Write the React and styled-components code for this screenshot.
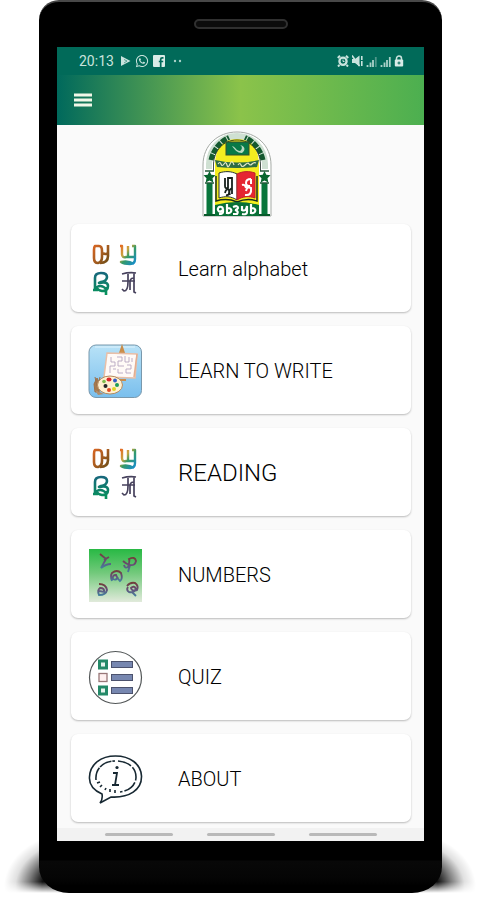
import styled, { createGlobalStyle } from "styled-components";
import { FaWhatsapp } from "react-icons/fa";

const GlobalStyle = createGlobalStyle`
  * {
    box-sizing: border-box;
  }
  body {
    margin: 0;
    background: #fff;
    font-family: Roboto, "Liberation Sans", sans-serif;
  }
`;

const Stage = styled.div`
  position: relative;
  padding: 0 38px 0 39px;
  overflow: hidden;
`;

const FloorShadow = styled.span`
  position: absolute;
  bottom: 0;
  ${(props) => props.$side}: 0;
  width: 80px;
  height: 56px;
  background: radial-gradient(
    ellipse 76px 56px at ${(props) => (props.$side === "left" ? "right" : "left")} 50px,
    #000 0%,
    rgba(0, 0, 0, 0.95) 50%,
    rgba(0, 0, 0, 0.5) 68%,
    rgba(0, 0, 0, 0.12) 85%,
    transparent 100%
  );
  mask-image: linear-gradient(#000 80%, transparent 100%);
`;

const Phone = styled.div`
  position: relative;
  padding: 0 18px 52px;
  background: linear-gradient(#000 0, #000 858px, #080808 859px, #050505 876px, #000 884px);
  border-top: 2px solid #484848;
  border-radius: 20px 20px 30px 30px / 20px 20px 26px 26px;
`;

const Earpiece = styled.div`
  height: 45px;
  padding-top: 17px;
  span {
    display: block;
    width: 94px;
    height: 10px;
    margin: 0 auto;
    border: 2px solid #303030;
    border-radius: 5px;
    background: #0c0c0c;
  }
`;

const Screen = styled.div`
  background: #fafafa;
`;

const StatusBar = styled.div`
  display: flex;
  align-items: center;
  justify-content: space-between;
  height: 28px;
  padding: 0 20px 0 22px;
  background: #016a59;
  color: #c9e3dd;
  font-size: 14px;
`;

const StatusGroup = styled.div`
  display: flex;
  align-items: center;
  gap: ${(props) => props.$gap || "4px"};
  svg {
    display: block;
  }
  time {
    margin-right: 2px;
  }
`;

const Toolbar = styled.header`
  display: flex;
  align-items: center;
  height: 50px;
  padding: 0 17px;
  background: linear-gradient(90deg, #00695c 0%, #8bc34a 50%, #4caf50 100%);
`;

const MenuButton = styled.button`
  display: block;
  padding: 0;
  border: 0;
  background: none;
  svg {
    display: block;
  }
`;

const LogoWrapper = styled.div`
  display: flex;
  justify-content: center;
  padding: 6px 8px 7px 0;
`;

const CardList = styled.main`
  display: flex;
  flex-direction: column;
  gap: 14px;
  padding: 0 13px 6px 14px;
`;

const Card = styled.button`
  display: flex;
  align-items: center;
  gap: 35px;
  width: 100%;
  height: 88px;
  padding: 2px 17px 0;
  border: 0;
  border-radius: 7px;
  background: #fff;
  box-shadow: 0 1px 2px rgba(0, 0, 0, 0.26);
  color: #000;
  font-family: inherit;
  font-size: ${(props) => (props.$large ? "24px" : "20px")};
  font-weight: 300;
  text-align: left;
  svg {
    flex: none;
  }
`;

const NavBar = styled.div`
  display: flex;
  justify-content: center;
  gap: 34px;
  height: 13px;
  padding-top: 5px;
  background: #f2f2f2;
  span {
    width: 68px;
    height: 3px;
    border-radius: 2px;
    background: #b9b9b9;
  }
`;

const PlayIcon = () => (
  <svg width="11" height="12" viewBox="0 0 11 12">
    <path d="M1 1l9.500 5L1 11z" fill="#c9e3dd" />
    <path d="M4 4.500l3 1.500-3 2" stroke="#3f8f81" strokeWidth=".8" fill="none" />
  </svg>
);

const FacebookIcon = () => (
  <svg width="12" height="12" viewBox="0 0 12 12">
    <rect width="12" height="12" rx="1" fill="#d9ece7" />
    <path d="M10.5 2.8H9.2Q7.7 2.8 7.7 4.3V12M5.8 6.5h4.4" stroke="#016a59" strokeWidth="1.7" fill="none" />
  </svg>
);

const MoreDots = () => (
  <svg width="18" height="4" viewBox="0 0 18 4" fill="#a9d1c8">
    <circle cx="6" cy="2" r="1.200" />
    <circle cx="11" cy="2" r="1.200" />
  </svg>
);

const AlarmIcon = () => (
  <svg width="12" height="12" viewBox="0 0 12 12" fill="none" stroke="#c9e3dd">
    <circle cx="6" cy="6.3" r="3.6" strokeWidth="2.3" />
    <path d="M.8 3L3 .8M11.200 3L9 .8M2.500 10L1 11.500M9.500 10L11 11.500" strokeWidth="2" />
    <path d="M6 4.500v2h1.500" strokeWidth="1" />
  </svg>
);

const MuteIcon = () => (
  <svg width="11" height="12" viewBox="0 0 11 12" fill="#c9e3dd">
    <path d="M0 4h3L7.500 .5v11L3 8H0z" />
    <path d="M0 .5l7.500 10.500M9.800 1v4M9.800 6v5" stroke="#c9e3dd" strokeWidth="1.600" />
  </svg>
);

const SignalIcon = ({ weak }) => (
  <svg width="11" height="11" viewBox="0 0 11 11" strokeWidth="1.800">
    <path d="M1.500 9v2M4.500 6.500V11M7 4v7" stroke="#a9d1c8" />
    <path d="M9.800 1v10" stroke={weak ? "#4f978a" : "#a9d1c8"} />
  </svg>
);

const LockIcon = () => (
  <svg width="10" height="12" viewBox="0 0 10 12">
    <path d="M2.500 5V3.500a2.500 2.500 0 015 0V5" stroke="#c9e3dd" strokeWidth="1.500" fill="none" />
    <rect x=".8" y="4.500" width="8.400" height="7" rx="1" fill="#d9ece7" />
    <path d="M5 6.500v3M3.500 8h3" stroke="#016a59" />
  </svg>
);

const MenuIcon = () => (
  <svg width="18" height="14" viewBox="0 0 18 14" stroke="#f1f7e8" strokeWidth="2.800">
    <path d="M0 2h18M0 7h18M0 12h18" />
  </svg>
);

const Star = ({ x }) => (
  <path
    transform={`translate(${x} 46)`}
    d="M0-6l1.800 3.700 4.200.5-3 3 .8 4.200L0 3.600l-3.800 1.800.8-4.200-3-3 4.200-.5z"
    fill="#08662e"
  />
);

const Logo = () => (
  <svg width="70" height="86" viewBox="0 0 70 86" fill="none" role="img" aria-label="School emblem">
    <path d="M1 85V34C1 14 16 1 35 1s34 13 34 33v51z" fill="#fff" stroke="#a5aaa5" />
    <path d="M13 84V34C13 17 22 5 35 5s22 12 22 29v50z" fill="#f4ed20" />
    <path d="M7 38V33C7.500 18 18 5 35 5S62.500 18 63 33v5" stroke="#cfe0d2" strokeWidth="6" />
    <path d="M9 29C11 20 17 11 27 6.500M61 29C59 20 53 11 43 6.500" stroke="#14592f" strokeWidth="5" strokeDasharray="6 1" />
    <path d="M11.500 40v-7C12 20 21 9 35 9s23 11 23.500 24v7" stroke="#17251b" strokeWidth=".8" />
    <rect x="4.500" y="52" width="6" height="31" fill="#08753b" />
    <rect x="59.500" y="52" width="6" height="31" fill="#08753b" />
    <path d="M3 40h9M58 40h9M3 52h9M58 52h9" stroke="#235a38" strokeWidth="1.500" />
    <Star x={7.500} />
    <Star x={62.500} />
    <path d="M2 84h11M57 84h11" stroke="#075a2b" strokeWidth="2" />
    <rect x="24" y="11" width="23" height="13" fill="#087947" stroke="#34502c" />
    <path d="M30 15c4 1 4 5 8 5 3-2 2-5 0-6 5 1 6 5 2 8-5 0-7-3-10-7z" fill="#b9d9c0" />
    <path d="M13 29Q35 34 57 29L55 36Q35 38 15 36z" fill="#2c6b45" />
    <path d="M16 33q2-3 3 0t3 0 3 1 3-1 4 1M36 34q2-3 3 0t4 0 4-1 3 0 4-1" stroke="#e5e6c8" strokeWidth="1.200" />
    <path d="M35 43c-6-3-12-3-18-1v25c6-2 12-2 18 2z" fill="#fff" stroke="#26322b" />
    <path d="M35 43c6-3 12-3 18-1v25c-6-2-12-2-18 2z" fill="#e52632" stroke="#bb2529" />
    <path d="M14 45v25c7-2 14-2 21 1 7-3 14-3 20-1V45" stroke="#172c20" strokeWidth="1.500" />
    <path d="M23 47v8q0 3 3 2V47h4v16M23 62q1-5 4-3 1 6-3 5M30 57q-4 2-2 7" stroke="#17211c" strokeWidth="1.800" />
    <path d="M49 48q-5 0-5 4 0 3 4 3-2 1-5 1M49 48v5M40 54q3-1 4 3M43 64q7 1 6-7-4-2-5 3" stroke="#fff" strokeWidth="2" />
    <path d="M13 74q22-6 44 0v11H13z" fill="#087037" />
    <path d="M21 78c-1-4-6-2-5 1s5 1 5-1v3q0 2-4 2M25 73v9c5 1 6-5 1-5M31 76q5-2 5 1-1 2-3 2 4 1 2 4h-4M40 75v4q4 2 5-4v6q0 3-5 2M49 73v9c5 1 6-5 1-5" stroke="#fff" strokeWidth="2.200" />
  </svg>
);

const AlphabetIcon = () => (
  <svg width="55" height="55" viewBox="0 0 55 55" fill="none" strokeLinejoin="round">
    <defs>
      <linearGradient id="amber" x1="0" y1="0" x2="1" y2="1">
        <stop stopColor="#d76522" />
        <stop offset=".5" stopColor="#a85d20" />
        <stop offset="1" stopColor="#6c4c16" />
      </linearGradient>
      <linearGradient id="rainbow" x1="0" y1="0" x2="1" y2="1">
        <stop stopColor="#e56a22" />
        <stop offset=".35" stopColor="#c9a642" />
        <stop offset=".55" stopColor="#349a66" />
        <stop offset="1" stopColor="#168cd0" />
      </linearGradient>
      <linearGradient id="sea" x1="0" y1="0" x2="0" y2="1">
        <stop stopColor="#17687c" />
        <stop offset="1" stopColor="#07945b" />
      </linearGradient>
    </defs>
    <path
      d="M11 4H7q-1 1-1 4v8q0 5 4 5 4-1 4-6V9q0-5-3-5M20 3v11q0 7-8 7M15 11q2 2 5 0"
      stroke="url(#amber)"
      strokeWidth="2.600"
    />
    <path
      d="M32 4h2v8q0 4 4 3h8M40 4v11M44 4h3v13q0 5-5 5-6 0-9-2 7-2 13 2"
      stroke="url(#rainbow)"
      strokeWidth="2.400"
    />
    <path
      d="M5 48h5M7 47V36q0-5 6-5 6 0 6 4 0 4-6 5l-2 1q9-2 9 3 0 5-6 5-5-1-5-4 5-3 10 3M18 46v7"
      stroke="url(#sea)"
      strokeWidth="2.600"
    />
    <path
      d="M34 32q7-2 14-1M40 32v8q0 9-4 9l-2-2M34 39h13M46 31v19l2 1M42 48v-8q0-4 4-4"
      stroke="#47425d"
      strokeWidth="1.700"
    />
  </svg>
);

const PaintIcon = () => (
  <svg width="55" height="55" viewBox="0 0 55 55" fill="none">
    <defs>
      <linearGradient id="sky" x1="0" y1="0" x2="0" y2="1">
        <stop stopColor="#b8e2f7" />
        <stop offset="1" stopColor="#7abfed" />
      </linearGradient>
    </defs>
    <rect x="1" y="1" width="52.500" height="52.500" rx="7" fill="url(#sky)" stroke="#7998ac" />
    <path d="M7 3h40" stroke="#dff2fc" />
    <path d="M34 3l-2 6h4zM29 34l-4 4M24 36h14" fill="#d69a51" stroke="#c88c4b" strokeWidth="2" />
    <path d="M19 9l30 1-2 24-31-1z" fill="#fffaf7" stroke="#e8bfa8" strokeWidth="1.500" />
    <path
      d="M23 13v5h4v4h-5v7M29 13h5v4h-4v5h6M30 25v4h5M37 12v6h4v-5M39 21h4v4h-5v4h5M44 14v4M25 25h3"
      stroke="#b5a6c0"
      strokeWidth=".9"
    />
    <path d="M49 10l-3 23" stroke="#e3ae91" strokeWidth="1.500" />
    <path d="M9 34l3 6-1 8H7l-1-8zM7 33l2 9M12 33l-2 9" fill="#a67a4e" stroke="#9c7048" />
    <ellipse cx="22" cy="41" rx="12.500" ry="9" fill="#fff0d0" stroke="#b78b5e" />
    <path d="M7 46l9 4-6 1z" fill="#b18d6b" />
    <ellipse cx="21" cy="35.500" rx="2.500" ry="2" fill="#db272c" />
    <ellipse cx="27" cy="36.500" rx="2" ry="2" fill="#345ec5" />
    <ellipse cx="29" cy="41" rx="2" ry="2" fill="#219b55" />
    <ellipse cx="26" cy="45" rx="2" ry="2" fill="#e0d526" />
    <ellipse cx="21" cy="46" rx="2" ry="2" fill="#e44a24" />
    <circle cx="17.500" cy="42" r="2" fill="#242629" />
    <circle cx="16" cy="37.500" r="1.800" fill="#80bd4d" />
  </svg>
);

const NumbersIcon = () => (
  <svg width="55" height="55" viewBox="0 0 55 55" fill="none">
    <defs>
      <linearGradient id="meadow" x1="0" y1="0" x2="0" y2="1">
        <stop stopColor="#28b944" />
        <stop offset=".45" stopColor="#72c97b" />
        <stop offset="1" stopColor="#e1eadb" />
      </linearGradient>
      <linearGradient id="ink" x1="0" y1="0" x2="0" y2="1">
        <stop stopColor="#713e3b" />
        <stop offset=".5" stopColor="#665078" />
        <stop offset="1" stopColor="#447e9c" />
      </linearGradient>
    </defs>
    <rect x="1" y="1" width="53" height="53" fill="url(#meadow)" />
    <g stroke="url(#ink)" strokeWidth="1.900">
      <path d="M12 6l6 5-5 9q5-4 10-4M16 12l5-3" />
      <path d="M36 17q1 4 4 2 2-6 1-8 6-3 7 2-1 5-6 4-4-1-7-4M42 17l-2 7" />
      <path d="M24 33q-2-5 0-8 5-4 9 0 2 6-1 8-3-3-4-6-4 0-3 4 3 2 5-2" />
      <path d="M11 36q7 0 8 6-1 5-8 5-2-5 1-7 5 0 4 4l-5-1" />
      <path d="M39 38q3-4 8-3 4 3 2 7-5 2-6-2 3-3 5 1-2 4-7 3-3-2-1-5M44 44l4 4" />
    </g>
  </svg>
);

const QuizIcon = () => (
  <svg width="55" height="55" viewBox="0 0 55 55" fill="none">
    <circle cx="27.500" cy="27.500" r="26" fill="#fff" stroke="#525657" strokeWidth="1.200" />
    <rect x="11.500" y="11" width="7" height="7" fill="#e7f4ed" stroke="#248968" strokeWidth="3" />
    <rect x="11" y="23.500" width="8" height="8" fill="#fff0f0" stroke="#987778" strokeWidth="1.300" />
    <rect x="11.500" y="37" width="7" height="7" fill="#e7f4ed" stroke="#248968" strokeWidth="3" />
    <g fill="#7787b0" stroke="#4c526d">
      <rect x="23.500" y="11.500" width="21" height="6" />
      <rect x="23.500" y="24.500" width="21" height="6" />
      <rect x="23.500" y="37.500" width="21" height="6" />
    </g>
  </svg>
);

const AboutIcon = () => (
  <svg width="55" height="55" viewBox="0 0 55 55" fill="none" stroke="#172832" strokeWidth="1.600">
    <path d="M14 42C5 38 1 32 1.500 25 2 12 13 4 27.500 4S53 12 53.500 24C54 38 41 46 23 45L12 51q3-4 2-9z" />
    <path d="M8 28C7 17 15 9 27 9" strokeDasharray="13 1" />
    <path d="M30 9C41 10 48 16 48 25c0 8-7 14-16 15" strokeDasharray="14 2" />
    <path d="M9 31l3-1M12 35l2-2M17 38l1-2M22 40v-3M27 41v-3" />
    <path d="M25 21h4l-2 12M24 33h7" strokeWidth="1.800" />
    <circle cx="29" cy="15.500" r="1.600" fill="#172832" stroke="none" />
  </svg>
);

const items = [
  { label: "Learn alphabet", Icon: AlphabetIcon },
  { label: "LEARN TO WRITE", Icon: PaintIcon },
  { label: "READING", Icon: AlphabetIcon, large: true },
  { label: "NUMBERS", Icon: NumbersIcon },
  { label: "QUIZ", Icon: QuizIcon },
  { label: "ABOUT", Icon: AboutIcon },
];

const App = () => {
  return (
    <Stage>
      <GlobalStyle />
      <FloorShadow $side="left" />
      <FloorShadow $side="right" />
      <Phone>
        <Earpiece>
          <span />
        </Earpiece>
        <Screen>
          <StatusBar>
            <StatusGroup>
              <time>20:13</time>
              <PlayIcon />
              <FaWhatsapp size={14} />
              <FacebookIcon />
              <MoreDots />
            </StatusGroup>
            <StatusGroup $gap="3px">
              <AlarmIcon />
              <MuteIcon />
              <SignalIcon weak />
              <SignalIcon />
              <LockIcon />
            </StatusGroup>
          </StatusBar>
          <Toolbar>
            <MenuButton aria-label="Open menu">
              <MenuIcon />
            </MenuButton>
          </Toolbar>
          <LogoWrapper>
            <Logo />
          </LogoWrapper>
          <CardList>
            {items.map(({ label, Icon, large }) => (
              <Card key={label} $large={large}>
                <Icon />
                {label}
              </Card>
            ))}
          </CardList>
          <NavBar>
            <span />
            <span />
            <span />
          </NavBar>
        </Screen>
      </Phone>
    </Stage>
  );
};

export default App;
